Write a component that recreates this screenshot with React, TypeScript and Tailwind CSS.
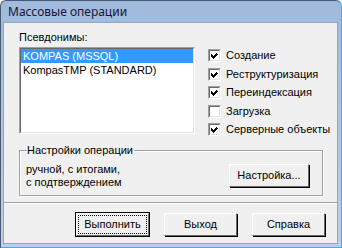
import { useState } from 'react';

const aliases = ['KOMPAS (MSSQL)', 'KompasTMP (STANDARD)'];

const options = [
  { label: 'Создание', checked: true },
  { label: 'Реструктуризация', checked: true },
  { label: 'Переиндексация', checked: true },
  { label: 'Загрузка', checked: false },
  { label: 'Серверные объекты', checked: true },
];

function CheckBox({ checked }: { checked: boolean }) {
  return (
    <span className="w-[13px] h-[13px] flex-none border border-t-[#a0a0a0] border-l-[#a0a0a0] border-r-white border-b-white">
      <span className="block w-[11px] h-[11px] bg-white border border-t-[#696969] border-l-[#696969] border-r-[#e3e3e3] border-b-[#e3e3e3]">
        {checked && (
          <svg width="9" height="9" viewBox="0 0 9 9" className="block">
            <path d="M1 3h1v1h1v1h1V4h1V3h1V2h1v1h1v1H7v1H6v1H5v1H4v1H3V7H2V6H1z" fill="#000" shapeRendering="crispEdges" />
          </svg>
        )}
      </span>
    </span>
  );
}

function Button({ label, isDefault, width = 'w-[75px]' }: { label: string; isDefault?: boolean; width?: string }) {
  return (
    <button
      className={
        width + ' h-[25px] flex-none bg-[#f0f0f0] ' +
        (isDefault ? 'border border-black' : 'border border-transparent')
      }
    >
      <span className="flex w-full h-full border border-t-white border-l-white border-r-[#696969] border-b-[#696969] shadow-[1px_1px_0_0_#000]">
        <span
          className={
            'flex flex-1 items-center justify-center m-[2px] whitespace-nowrap ' +
            (isDefault ? 'outline outline-1 outline-dotted outline-black' : '')
          }
        >
          {label}
        </span>
      </span>
    </button>
  );
}

export default function App() {
  const [selected, setSelected] = useState(0);

  return (
    <div
      className="w-[342px] h-[248px] flex flex-col bg-gradient-to-b from-[#9fbadc] to-[#bad0e8] border border-[#4a5a70] border-r-[#2fb8e0] border-b-[#2fb8e0] rounded-t-[6px] overflow-hidden text-[11px] text-black"
      style={{ fontFamily: '"Liberation Sans", Arial, sans-serif' }}
    >
      <div className="h-[21px] flex items-center pl-[7px] text-[12px] text-[#1c1436]" style={{ fontFamily: '"Noto Sans", sans-serif' }}>
        Массовые операции
      </div>

      <div className="flex-1 ml-[2px] mr-[3px] mb-[3px] bg-[#f0f0f0] border border-[#8ea6c4] flex flex-col">
        <div className="h-[180px] border-b border-[#a0a0a0] shadow-[0_1px_0_0_#fff] pl-[15px] pr-[12px] pt-[8px] flex flex-col">
          <div className="flex">
            <div className="flex flex-col flex-none">
              <div className="leading-[13px] mb-[3px]">Псевдонимы:</div>
              <div className="w-[176px] h-[87px] border border-t-[#a0a0a0] border-l-[#a0a0a0] border-r-white border-b-white">
                <div className="w-full h-full bg-white border border-t-[#696969] border-l-[#696969] border-r-[#e3e3e3] border-b-[#e3e3e3]">
                  {aliases.map((a, i) => (
                    <div
                      key={a}
                      onClick={() => setSelected(i)}
                      className={
                        'h-[14px] leading-[14px] pl-[2px] ' +
                        (i === selected ? 'bg-[#3399ff] text-white' : '')
                      }
                    >
                      {a}
                    </div>
                  ))}
                </div>
              </div>
            </div>

            <div className="flex flex-col gap-[5.5px] ml-[13px] mt-[18px]">
              {options.map((o) => (
                <label key={o.label} className="flex items-center gap-[5px] h-[13px] whitespace-nowrap">
                  <CheckBox checked={o.checked} />
                  <span>{o.label}</span>
                </label>
              ))}
            </div>
          </div>

          <div className="relative mt-[14px] w-[304px] h-[46px] border border-[#a0a0a0] shadow-[inset_1px_1px_0_0_#fff,1px_1px_0_0_#fff] flex items-center justify-between pl-[6px] pr-[12px]">
            <span className="absolute -top-[7px] left-[7px] bg-[#f0f0f0] leading-[13px] pr-[1px]">Настройки операции</span>
            <div className="flex flex-col leading-[13px] mt-[6px] whitespace-nowrap">
              <span>ручной, с итогами,</span>
              <span>с подтверждением</span>
            </div>
            <div className="mt-[4px]">
              <Button label="Настройка..." width="w-[82px]" />
            </div>
          </div>
        </div>

        <div className="flex justify-end gap-[13px] pt-[9px] pr-[11px]">
          <Button label="Выполнить" isDefault />
          <Button label="Выход" />
          <Button label="Справка" />
        </div>
      </div>
    </div>
  );
}
